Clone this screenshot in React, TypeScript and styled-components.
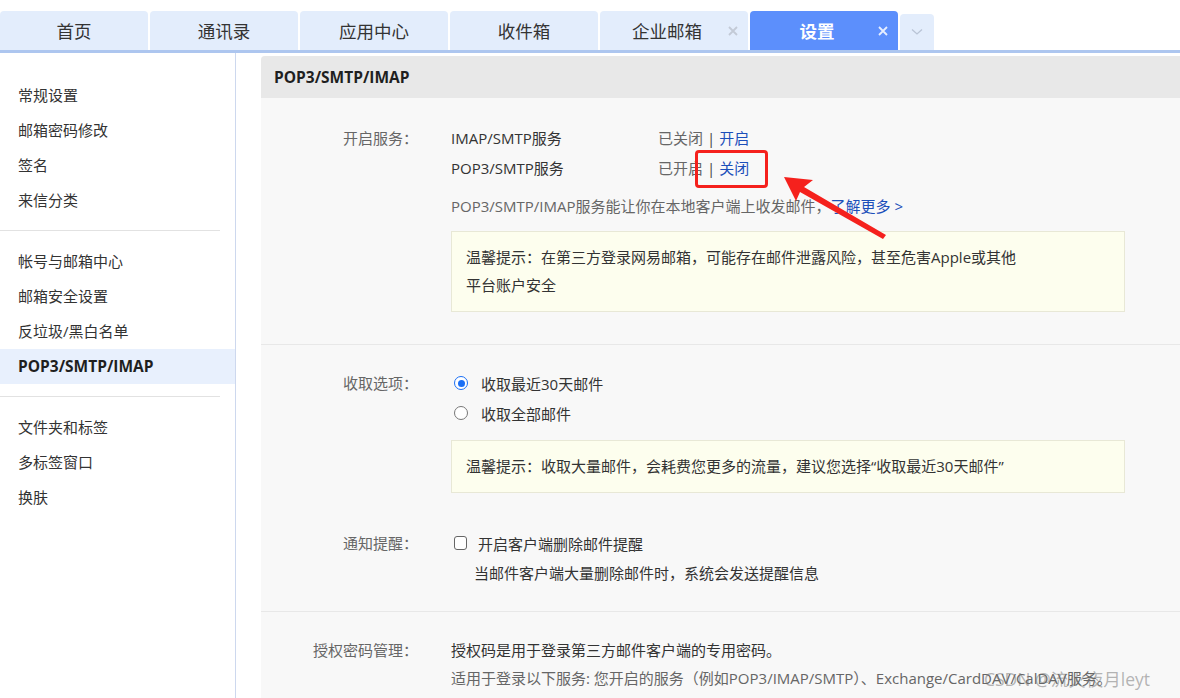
import React from 'react';
import styled, { createGlobalStyle } from 'styled-components';

const Global = createGlobalStyle`
  html, body { margin: 0; padding: 0; background: #fff; overflow: hidden; }
  body { font-family: "Open Sans", "Noto Sans CJK SC", sans-serif; color: #333; font-size: 15px; }
  * { box-sizing: border-box; }
`;

const Page = styled.div`
  position: relative;
  width: 1180px;
  height: 698px;
  display: flex;
  flex-direction: column;
  overflow: hidden;
`;

const TabBar = styled.div`
  display: flex;
  align-items: flex-end;
  gap: 2px;
  padding-top: 11px;
  border-bottom: 3px solid #adc6ef;
  flex: none;
`;

const Tab = styled.div<{ $active?: boolean; $closable?: boolean }>`
  position: relative;
  width: 148px;
  height: 39px;
  display: flex;
  align-items: center;
  justify-content: center;
  padding-right: ${(p) => (p.$closable ? '14px' : '0')};
  border-radius: 4px 4px 0 0;
  background: ${(p) => (p.$active ? '#5c8ffc' : '#e3edfc')};
  color: ${(p) => (p.$active ? '#fff' : '#333')};
  font-size: 17.5px;
  font-weight: ${(p) => (p.$active ? 700 : 400)};
`;

const CloseIcon = styled.svg<{ $active?: boolean }>`
  position: absolute;
  right: 10px;
  top: 15px;
  width: 10px;
  height: 10px;
  stroke: ${(p) => (p.$active ? '#e6eeff' : '#c3cad6')};
  stroke-width: 1.8;
`;

const MoreTab = styled.div`
  width: 34px;
  height: 36px;
  border-radius: 4px 4px 0 0;
  background: #e3edfc;
  display: flex;
  align-items: center;
  justify-content: center;
`;

const Body = styled.div`
  flex: 1;
  display: flex;
  min-height: 0;
`;

const Sidebar = styled.nav`
  width: 236px;
  flex: none;
  border-right: 1px solid #cdd8ee;
  padding-top: 25px;
`;

const NavGroup = styled.div`
  display: flex;
  flex-direction: column;
`;

const NavItem = styled.div<{ $active?: boolean }>`
  height: 35px;
  line-height: 35px;
  padding-left: 18px;
  font-size: ${(p) => (p.$active ? '15.5px' : '15px')};
  color: ${(p) => (p.$active ? '#1f1f1f' : '#333')};
  font-weight: ${(p) => (p.$active ? 700 : 400)};
  background: ${(p) => (p.$active ? '#e8f0fd' : 'transparent')};
`;

const NavDivider = styled.div`
  width: 220px;
  height: 1px;
  background: #e2e2e2;
  margin: 12px 0 13px;
`;

const Main = styled.main`
  flex: 1;
  padding: 3px 0 0 25px;
  min-width: 0;
`;

const Panel = styled.div`
  background: #f8f8f8;
  border-radius: 4px 0 0 0;
  overflow: hidden;
  height: 100%;
`;

const PanelHeader = styled.div`
  height: 42px;
  line-height: 42px;
  background: #e8e8e8;
  padding-left: 13px;
  font-size: 15.5px;
  font-weight: 700;
  color: #1f1f1f;
`;

const Section = styled.section<{ $pt: number; $pb: number; $border?: boolean }>`
  display: grid;
  grid-template-columns: 157px 1fr;
  column-gap: 33px;
  align-items: start;
  padding: ${(p) => p.$pt}px 55px ${(p) => p.$pb}px 0;
  border-top: ${(p) => (p.$border ? '1px solid #e8e8e8' : 'none')};
`;

const Label = styled.div<{ $lh?: number; $mt?: number }>`
  text-align: right;
  color: #666;
  font-size: 15px;
  line-height: ${(p) => p.$lh ?? 30}px;
  margin-top: ${(p) => p.$mt ?? 0}px;
  white-space: nowrap;
`;

const Content = styled.div<{ $mt?: number }>`
  display: flex;
  flex-direction: column;
  font-size: 15px;
  margin-top: ${(p) => p.$mt ?? 0}px;
`;

const ServiceRow = styled.div`
  display: grid;
  grid-template-columns: 207px auto;
  line-height: 30px;
  color: #333;
`;

const Muted = styled.span`
  color: #666;
`;

const Sep = styled.span`
  color: #444;
  margin: 0 4px;
`;

const Link = styled.span`
  color: #1c4fba;
`;

const Desc = styled.div`
  margin-top: 8px;
  line-height: 30px;
  color: #666;
  white-space: nowrap;
`;

const TipBox = styled.div<{ $mt: number }>`
  margin-top: ${(p) => p.$mt}px;
  background: #fdfeee;
  border: 1px solid #e8e8d6;
  padding: 11px 14px 12px;
  line-height: 28px;
  color: #333;
  font-size: 15px;
  white-space: nowrap;
`;

const OptionRow = styled.label`
  display: flex;
  align-items: center;
  height: 30px;
  gap: 13px;
  color: #333;
  padding-left: 3px;
`;

const Radio = styled.span<{ $checked?: boolean }>`
  width: 14px;
  height: 14px;
  border-radius: 50%;
  border: ${(p) => (p.$checked ? '1.5px solid #1a6ff5' : '1.2px solid #777')};
  background: #fff;
  display: flex;
  align-items: center;
  justify-content: center;
  &::after {
    content: '';
    width: 7px;
    height: 7px;
    border-radius: 50%;
    background: ${(p) => (p.$checked ? '#1a6ff5' : 'transparent')};
  }
`;

const Checkbox = styled.span`
  width: 13px;
  height: 14px;
  border: 1.2px solid #666;
  border-radius: 3px;
  background: #fff;
`;

const CheckRow = styled.label`
  display: flex;
  align-items: center;
  height: 30px;
  gap: 11px;
  padding-left: 3px;
  color: #333;
`;

const SubText = styled.div`
  line-height: 30px;
  padding-left: 23px;
  color: #333;
`;

const Line = styled.div<{ $muted?: boolean }>`
  line-height: 28px;
  color: ${(p) => (p.$muted ? '#666' : '#333')};
  white-space: nowrap;
`;

const Highlight = styled.div`
  position: absolute;
  left: 695px;
  top: 150px;
  width: 73px;
  height: 38px;
  border: 3px solid #f5211d;
  border-radius: 4px;
  pointer-events: none;
`;

const Arrow = styled.svg`
  position: absolute;
  left: 770px;
  top: 165px;
  width: 130px;
  height: 85px;
  pointer-events: none;
`;

const Watermark = styled.div`
  position: absolute;
  left: 984px;
  top: 666px;
  font-size: 17.5px;
  line-height: 26px;
  color: rgba(110, 110, 110, 0.5);
  white-space: nowrap;
  pointer-events: none;
`;

const tabs = [
  { label: '首页' },
  { label: '通讯录' },
  { label: '应用中心' },
  { label: '收件箱' },
  { label: '企业邮箱', closable: true },
  { label: '设置', closable: true, active: true },
];

const navGroups = [
  ['常规设置', '邮箱密码修改', '签名', '来信分类'],
  ['帐号与邮箱中心', '邮箱安全设置', '反垃圾/黑白名单', 'POP3/SMTP/IMAP'],
  ['文件夹和标签', '多标签窗口', '换肤'],
];

export default function App() {
  return (
    <>
      <Global />
      <Page>
        <TabBar>
          {tabs.map((t) => (
            <Tab key={t.label} $active={t.active} $closable={t.closable}>
              {t.label}
              {t.closable && (
                <CloseIcon $active={t.active} viewBox="0 0 10 10">
                  <path d="M1 1 L9 9 M9 1 L1 9" />
                </CloseIcon>
              )}
            </Tab>
          ))}
          <MoreTab>
            <svg width="12" height="8" viewBox="0 0 12 8">
              <path d="M1 1.5 L6 6 L11 1.5" fill="none" stroke="#b9c4d6" strokeWidth="1.3" />
            </svg>
          </MoreTab>
        </TabBar>
        <Body>
          <Sidebar>
            {navGroups.map((g, gi) => (
              <React.Fragment key={gi}>
                {gi > 0 && <NavDivider />}
                <NavGroup>
                  {g.map((item) => (
                    <NavItem key={item} $active={item === 'POP3/SMTP/IMAP'}>
                      {item}
                    </NavItem>
                  ))}
                </NavGroup>
              </React.Fragment>
            ))}
          </Sidebar>
          <Main>
            <Panel>
              <PanelHeader>POP3/SMTP/IMAP</PanelHeader>
              <Section $pt={25} $pb={32}>
                <Label>开启服务：</Label>
                <Content>
                  <ServiceRow>
                    <span>IMAP/SMTP服务</span>
                    <span>
                      <Muted>已关闭</Muted>
                      <Sep>|</Sep>
                      <Link>开启</Link>
                    </span>
                  </ServiceRow>
                  <ServiceRow>
                    <span>POP3/SMTP服务</span>
                    <span>
                      <Muted>已开启</Muted>
                      <Sep>|</Sep>
                      <Link>关闭</Link>
                    </span>
                  </ServiceRow>
                  <Desc>
                    POP3/SMTP/IMAP服务能让你在本地客户端上收发邮件，<Link>了解更多 &gt;</Link>
                  </Desc>
                  <TipBox $mt={10}>
                    温馨提示：在第三方登录网易邮箱，可能存在邮件泄露风险，甚至危害Apple或其他
                    <br />
                    平台账户安全
                  </TipBox>
                </Content>
              </Section>
              <Section $pt={23} $pb={23} $border>
                <Label>收取选项：</Label>
                <Content>
                  <OptionRow>
                    <Radio $checked />
                    收取最近30天邮件
                  </OptionRow>
                  <OptionRow>
                    <Radio />
                    收取全部邮件
                  </OptionRow>
                  <TipBox $mt={12}>温馨提示：收取大量邮件，会耗费您更多的流量，建议您选择“收取最近30天邮件”</TipBox>
                </Content>
                <Label $mt={35}>通知提醒：</Label>
                <Content $mt={35}>
                  <CheckRow>
                    <Checkbox />
                    开启客户端删除邮件提醒
                  </CheckRow>
                  <SubText>当邮件客户端大量删除邮件时，系统会发送提醒信息</SubText>
                </Content>
              </Section>
              <Section $pt={24} $pb={10} $border>
                <Label $lh={28}>授权密码管理：</Label>
                <Content>
                  <Line>授权码是用于登录第三方邮件客户端的专用密码。</Line>
                  <Line $muted>
                    适用于登录以下服务: 您开启的服务（例如POP3/IMAP/SMTP）、Exchange/CardDAV/CalDAV服务。
                  </Line>
                </Content>
              </Section>
            </Panel>
          </Main>
        </Body>
        <Highlight />
        <Arrow viewBox="0 0 130 85">
          <polygon
            points="14,12 43,15 34,22 116,70 113,74 30,27 26,36"
            fill="#f5211d"
          />
        </Arrow>
        <Watermark>CSDN @流火夜月leyt</Watermark>
      </Page>
    </>
  );
}
